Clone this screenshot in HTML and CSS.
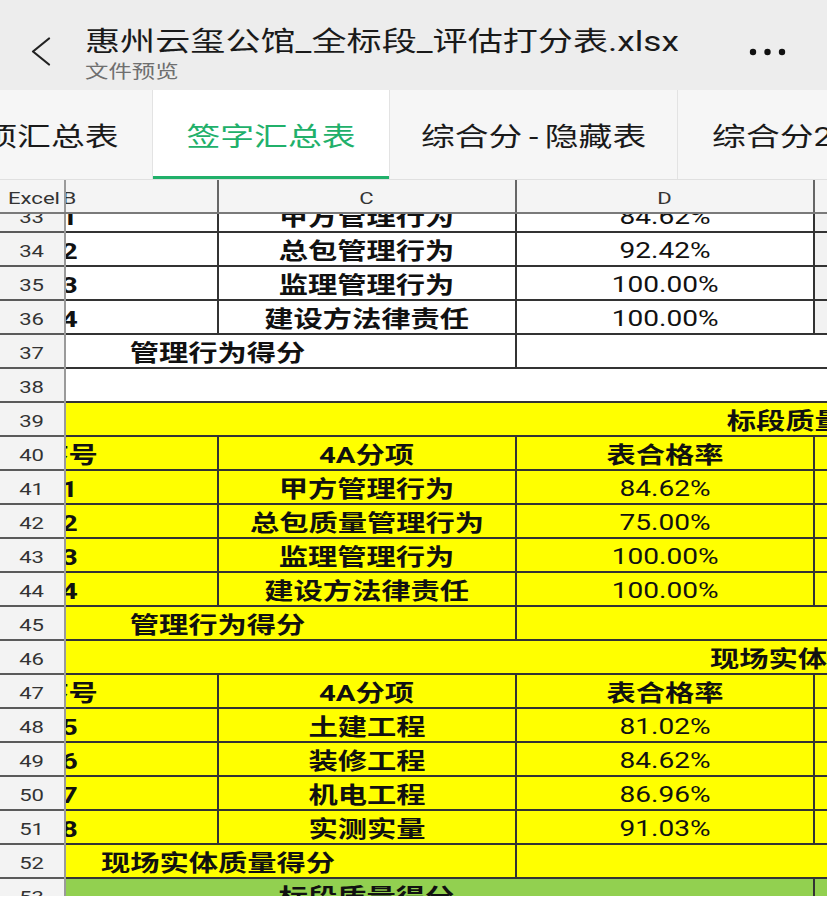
FILE: index.html
```html
<!DOCTYPE html>
<html lang="zh-CN">
<head>
<meta charset="utf-8">
<title>惠州云玺公馆_全标段_评估打分表.xlsx</title>
<link rel="stylesheet" href="styles.css">
</head>
<body>
<header class="topbar">
  <div class="back">
    <svg width="20" height="29" viewBox="0 0 20 29"><polyline points="18,1.5 2,14.5 18,27.5" fill="none" stroke="#222" stroke-width="2.2" stroke-linecap="round" stroke-linejoin="round"/></svg>
  </div>
  <div class="titles">
    <div class="title"><span class="sx sl">惠州云玺公馆_全标段_评估打分表.xlsx</span></div>
    <div class="subtitle"><span class="sx sl">文件预览</span></div>
  </div>
  <div class="more">
    <svg width="42" height="10" viewBox="0 0 42 10"><circle cx="7" cy="5" r="3.2" fill="#111"/><circle cx="21.5" cy="5" r="3.2" fill="#111"/><circle cx="36" cy="5" r="3.2" fill="#111"/></svg>
  </div>
</header>

<nav class="tabs">
  <div class="tabs-track">
    <div class="tab tab-1"><span class="sx">分项汇总表</span></div>
    <div class="tab tab-2 active"><span class="sx">签字汇总表</span></div>
    <div class="tab tab-3"><span class="sx">综合分<span class="hy">-</span>隐藏表</span></div>
    <div class="tab tab-4"><span class="sx">综合分2</span></div>
  </div>
</nav>

<section class="sheet">
  <div class="colheads">
    <div class="corner"><span class="sx sl">Excel</span></div>
    <div class="colclip">
      <div class="colgrid">
        <div class="ch"><span class="sx">B</span></div>
        <div class="ch"><span class="sx">C</span></div>
        <div class="ch"><span class="sx">D</span></div>
        <div class="ch"><span class="sx">E</span></div>
        <div class="ch"><span class="sx">F</span></div>
        <div class="ch"><span class="sx">G</span></div>
      </div>
    </div>
  </div>
  <div class="body">
    <div class="rownums">
      <div class="rn-track">
        <div class="rn"><span class="sx">33</span></div>
        <div class="rn"><span class="sx">34</span></div>
        <div class="rn"><span class="sx">35</span></div>
        <div class="rn"><span class="sx">36</span></div>
        <div class="rn"><span class="sx">37</span></div>
        <div class="rn"><span class="sx">38</span></div>
        <div class="rn"><span class="sx">39</span></div>
        <div class="rn"><span class="sx">40</span></div>
        <div class="rn"><span class="sx">41</span></div>
        <div class="rn"><span class="sx">42</span></div>
        <div class="rn"><span class="sx">43</span></div>
        <div class="rn"><span class="sx">44</span></div>
        <div class="rn"><span class="sx">45</span></div>
        <div class="rn"><span class="sx">46</span></div>
        <div class="rn"><span class="sx">47</span></div>
        <div class="rn"><span class="sx">48</span></div>
        <div class="rn"><span class="sx">49</span></div>
        <div class="rn"><span class="sx">50</span></div>
        <div class="rn"><span class="sx">51</span></div>
        <div class="rn"><span class="sx">52</span></div>
        <div class="rn"><span class="sx">53</span></div>
      </div>
    </div>
    <div class="cellclip">
      <div class="cellgrid">
        <!-- 33 -->
        <div class="c br"><span class="sx">1</span></div>
        <div class="c br"><span class="sx">甲方管理行为</span></div>
        <div class="c br num"><span class="sx">84.62%</span></div>
        <div class="c sp3 gr"></div>
        <!-- 34 -->
        <div class="c br"><span class="sx">2</span></div>
        <div class="c br"><span class="sx">总包管理行为</span></div>
        <div class="c br num"><span class="sx">92.42%</span></div>
        <div class="c sp3 gr"></div>
        <!-- 35 -->
        <div class="c br"><span class="sx">3</span></div>
        <div class="c br"><span class="sx">监理管理行为</span></div>
        <div class="c br num"><span class="sx">100.00%</span></div>
        <div class="c sp3 gr"></div>
        <!-- 36 -->
        <div class="c br"><span class="sx">4</span></div>
        <div class="c br"><span class="sx">建设方法律责任</span></div>
        <div class="c br num"><span class="sx">100.00%</span></div>
        <div class="c sp3 gr"></div>
        <!-- 37 -->
        <div class="c sp2 br"><span class="sx">管理行为得分</span></div>
        <div class="c"></div>
        <div class="c sp3"></div>
        <!-- 38 -->
        <div class="c sp6"></div>
        <!-- 39 -->
        <div class="c sp6 y"><span class="sx">标段质量评分</span></div>
        <!-- 40 -->
        <div class="c br y"><span class="sx">序号</span></div>
        <div class="c br y"><span class="sx">4A分项</span></div>
        <div class="c br y"><span class="sx">表合格率</span></div>
        <div class="c sp3 y"></div>
        <!-- 41 -->
        <div class="c br y"><span class="sx">1</span></div>
        <div class="c br y"><span class="sx">甲方管理行为</span></div>
        <div class="c br y num"><span class="sx">84.62%</span></div>
        <div class="c sp3 y"></div>
        <!-- 42 -->
        <div class="c br y"><span class="sx">2</span></div>
        <div class="c br y"><span class="sx">总包质量管理行为</span></div>
        <div class="c br y num"><span class="sx">75.00%</span></div>
        <div class="c sp3 y"></div>
        <!-- 43 -->
        <div class="c br y"><span class="sx">3</span></div>
        <div class="c br y"><span class="sx">监理管理行为</span></div>
        <div class="c br y num"><span class="sx">100.00%</span></div>
        <div class="c sp3 y"></div>
        <!-- 44 -->
        <div class="c br y"><span class="sx">4</span></div>
        <div class="c br y"><span class="sx">建设方法律责任</span></div>
        <div class="c br y num"><span class="sx">100.00%</span></div>
        <div class="c sp3 y"></div>
        <!-- 45 -->
        <div class="c sp2 br y"><span class="sx">管理行为得分</span></div>
        <div class="c y"></div>
        <div class="c sp3 y"></div>
        <!-- 46 -->
        <div class="c sp6 y shift"><span class="sx">现场实体质量得分</span></div>
        <!-- 47 -->
        <div class="c br y"><span class="sx">序号</span></div>
        <div class="c br y"><span class="sx">4A分项</span></div>
        <div class="c br y"><span class="sx">表合格率</span></div>
        <div class="c sp3 y"></div>
        <!-- 48 -->
        <div class="c br y"><span class="sx">5</span></div>
        <div class="c br y"><span class="sx">土建工程</span></div>
        <div class="c br y num"><span class="sx">81.02%</span></div>
        <div class="c sp3 y"></div>
        <!-- 49 -->
        <div class="c br y"><span class="sx">6</span></div>
        <div class="c br y"><span class="sx">装修工程</span></div>
        <div class="c br y num"><span class="sx">84.62%</span></div>
        <div class="c sp3 y"></div>
        <!-- 50 -->
        <div class="c br y"><span class="sx">7</span></div>
        <div class="c br y"><span class="sx">机电工程</span></div>
        <div class="c br y num"><span class="sx">86.96%</span></div>
        <div class="c sp3 y"></div>
        <!-- 51 -->
        <div class="c br y"><span class="sx">8</span></div>
        <div class="c br y"><span class="sx">实测实量</span></div>
        <div class="c br y num"><span class="sx">91.03%</span></div>
        <div class="c sp3 y"></div>
        <!-- 52 -->
        <div class="c sp2 br y"><span class="sx">现场实体质量得分</span></div>
        <div class="c y"></div>
        <div class="c sp3 y"></div>
        <!-- 53 -->
        <div class="c sp3 br g"><span class="sx">标段质量得分</span></div>
        <div class="c sp3 g"></div>
      </div>
    </div>
  </div>
</section>
</body>
</html>
```

FILE: styles.css
```css
* { box-sizing: border-box; }

html, body {
  margin: 0;
  padding: 0;
}

body {
  width: 827px;
  height: 903px;
  overflow: hidden;
  background: #ffffff;
  font-family: Roboto, "Noto Sans CJK SC", sans-serif;
  color: #111111;
}

/* the screenshot is horizontally stretched: text is widened to match */
.sx {
  display: inline-block;
  transform: scaleX(1.3);
  transform-origin: center center;
  white-space: nowrap;
  line-height: 1.2;
}

.sl { transform-origin: left center; }

/* ---------- top bar ---------- */
.topbar {
  display: flex;
  height: 90px;
  background: #ededed;
}

.back {
  flex: none;
  width: 85px;
  padding: 37px 0 0 31px;
}

.back svg { display: block; }

.titles {
  flex: 1;
  min-width: 0;
  padding-top: 25px;
}

.title {
  font-size: 27px;
  line-height: 34px;
  color: #1a1a1a;
  white-space: nowrap;
}

.title .sx, .subtitle .sx { line-height: inherit; }

.subtitle {
  margin-top: 2px;
  font-size: 18px;
  line-height: 22px;
  color: #6f6f6f;
}

.more {
  flex: none;
  padding-top: 47px;
  margin-right: 39px;
}

.more svg { display: block; }

/* ---------- sheet tabs ---------- */
.tabs {
  height: 90px;
  overflow: hidden;
  background: #f6f6f6;
  border-bottom: 1px solid #e0e0e0;
}

.tabs-track {
  display: flex;
  height: 100%;
  margin-left: -83px;
}

.tab {
  flex: none;
  height: 100%;
  display: flex;
  align-items: center;
  justify-content: center;
  padding-top: 6px;
  font-size: 26px;
  color: #1a1a1a;
  border-right: 1px solid #e3e3e3;
}

.hy { margin: 0 5px; }

.tab-1 { width: 236px; }
.tab-2 { width: 237px; }
.tab-3 { width: 288px; }
.tab-4 { width: 190px; }

.tab.active {
  background: #ffffff;
  color: #21b06a;
  box-shadow: inset 0 -3px 0 #21b06a;
}

/* ---------- sheet ---------- */
.sheet {
  height: 716px;
  overflow: hidden;
}

.colheads {
  display: flex;
  height: 34px;
  background: #f4f4f4;
  border-bottom: 2px solid #7a7a7a;
}

.corner {
  flex: none;
  width: 66px;
  display: flex;
  align-items: center;
  padding: 4px 0 0 8px;
  font-size: 17px;
  color: #333333;
  border-right: 2px solid #9a9a9a;
}

.colclip {
  flex: 1;
  min-width: 0;
  overflow: hidden;
}

.colgrid {
  display: grid;
  grid-template-columns: repeat(6, 298px);
  width: 1788px;
  height: 100%;
  margin-left: -145px;
}

.ch {
  display: flex;
  align-items: center;
  justify-content: center;
  padding-top: 4px;
  font-size: 17px;
  color: #333333;
  border-right: 2px solid #666666;
}

.body {
  display: flex;
  height: 682px;
  overflow: hidden;
}

.rownums {
  flex: none;
  width: 66px;
  overflow: hidden;
  background: #f3f3f3;
  border-right: 2px solid #9a9a9a;
}

.rn-track { margin-top: -15px; }

.rn {
  height: 34px;
  display: flex;
  align-items: center;
  justify-content: center;
  padding-top: 4px;
  font-size: 17px;
  color: #333333;
  border-bottom: 2px solid #5a5a5a;
}

.cellclip {
  flex: 1;
  min-width: 0;
  overflow: hidden;
}

.cellgrid {
  display: grid;
  grid-template-columns: repeat(6, 298px);
  grid-auto-rows: 34px;
  width: 1788px;
  margin: -15px 0 0 -145px;
}

.c {
  display: flex;
  align-items: center;
  justify-content: center;
  overflow: hidden;
  white-space: nowrap;
  padding-top: 4px;
  font-size: 22.5px;
  font-weight: 700;
  color: #111111;
  border-bottom: 2px solid #333333;
}

.c.num {
  font-weight: 400;
  font-size: 21.6px;
}

.br { border-right: 2px solid #333333; }

.sp2 { grid-column: span 2; }
.sp3 { grid-column: span 3; }
.sp6 { grid-column: span 6; }

.shift { padding-left: 24px; }

.y { background: #ffff00; }
.g { background: #92d050; }
.gr { background: #f2f2f2; }
```
